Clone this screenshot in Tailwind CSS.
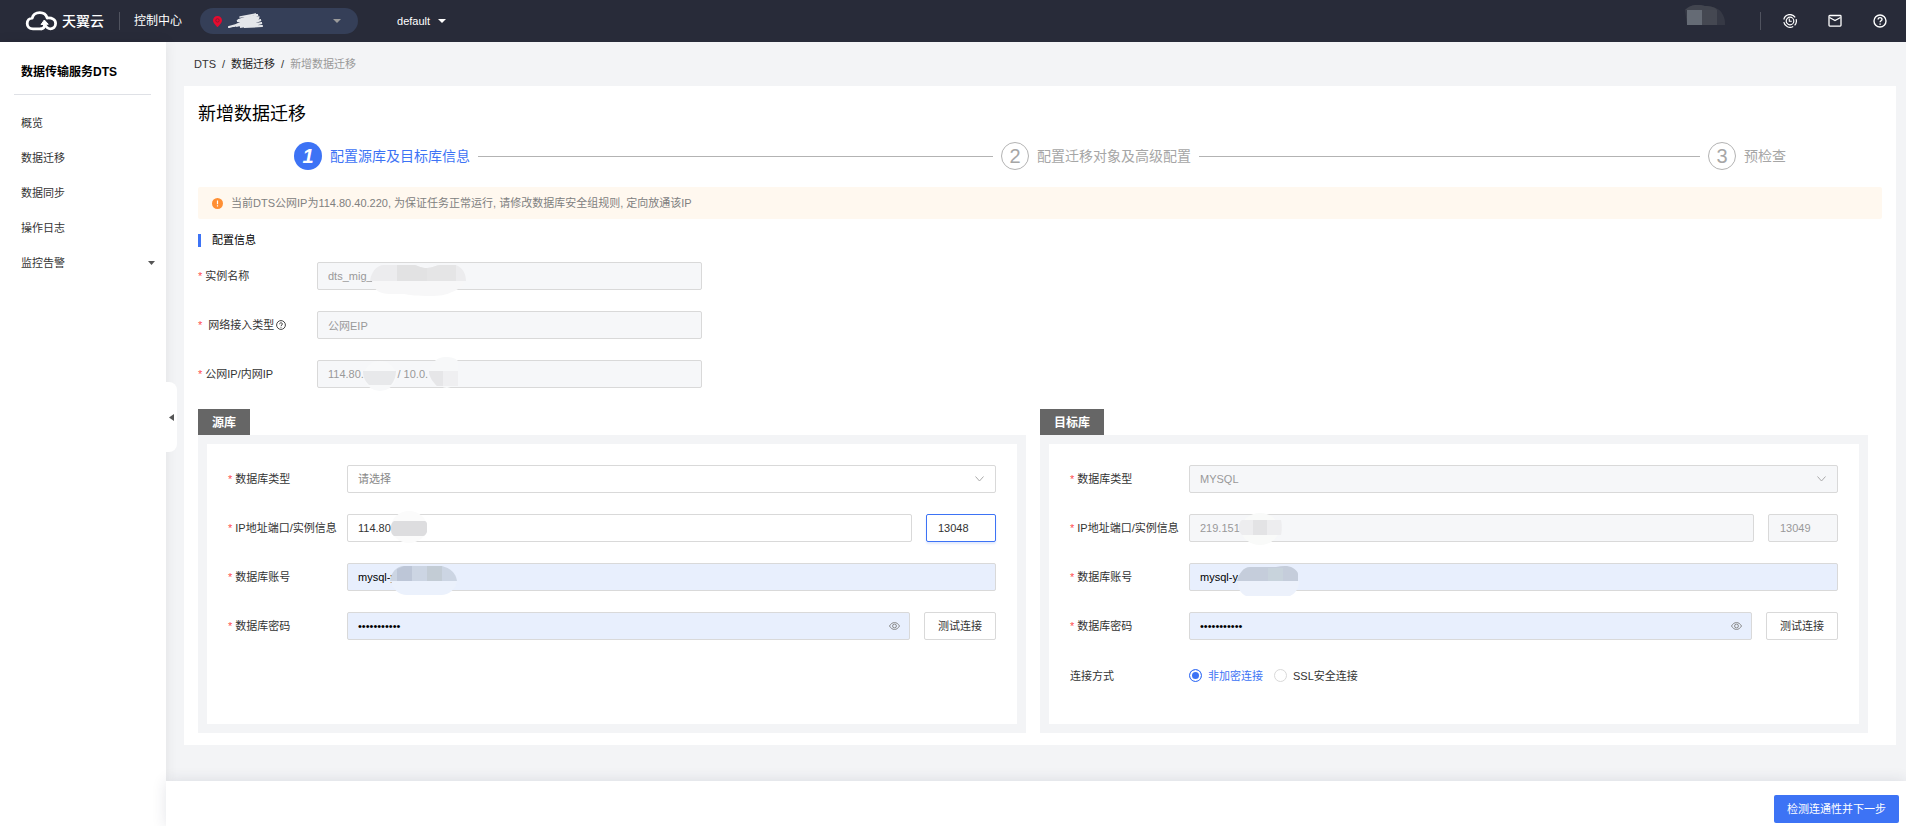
<!DOCTYPE html>
<html lang="zh-CN">
<head>
<meta charset="utf-8">
<meta name="viewport" content="width=device-width, initial-scale=1">
<title>新增数据迁移</title>
<script src="https://cdn.jsdelivr.net/npm/@tailwindcss/browser@4"></script>
</head>
<body class="flex min-h-screen flex-col bg-[#f3f4f6] font-['Liberation_Sans','Noto_Sans_CJK_SC',sans-serif] text-[11px] leading-4 text-[#333333]">

<header class="flex h-[42px] shrink-0 items-center bg-[#282b39] pr-[19px] pl-[25px] text-white">
  <a href="#" class="flex items-center gap-[5px]" aria-label="天翼云">
    <svg class="h-5 w-8" viewBox="0 0 32 20" fill="none" stroke="#fff" stroke-width="2.8" stroke-linecap="round" stroke-linejoin="round">
      <path d="M17 17.800H8C4.200 17.800 2.200 15.500 2.200 12.500c0-2.900 2-5.200 5-5.400C8 3.800 10.900 1.600 14.800 1.600c3.700 0 6.400 2.100 7.400 5.400 5-.4 8.400 1.700 8.400 5.600 0 3.200-2.400 5.200-5.200 5.200-3 0-4.400-1.800-5.800-4.400"/>
      <path d="M16.300 13.200l3-4.200 3.700 4z" fill="#fff" stroke-width="1"/>
      <path d="M19.600 13c0 2.800-1 4.800-3.600 4.800"/>
    </svg>
    <span class="text-[14px] font-medium leading-5">天翼云</span>
  </a>
  <div class="ml-[15px] h-[18px] w-px bg-[#50535f]"></div>
  <a href="#" class="ml-[14px] text-[12px]">控制中心</a>
  <button type="button" class="ml-[18px] flex h-[26px] w-[158px] items-center rounded-full bg-[#353f58] pr-[17px] pl-[13px]" aria-label="区域">
    <svg class="h-[11px] w-[9px]" viewBox="0 0 9 11"><path d="M4.500 0A4.400 4.400 0 0 0 0 4.400C0 7.200 4.500 11 4.500 11S9 7.200 9 4.400A4.400 4.400 0 0 0 4.500 0z" fill="#e60b2f"/><circle cx="4.500" cy="4.400" r="1.700" fill="none" stroke="#8d1730"/></svg>
    <svg class="ml-[6px] h-4 w-9" viewBox="0 0 36 16" fill="none" stroke="#e4e6ea" stroke-linecap="round"><path d="M1 14L12 11 6 13 30 2 9 8 31 5 8 13 33 7 12 14 34 10 16 14 34 13" stroke-width="2.200"/><path d="M12 4L28 1 10 7 31 4" stroke-width="1.500"/></svg>
    <svg class="ml-auto h-1 w-2" viewBox="0 0 8 4"><path d="M0 0h8L4 4z" fill="#9b9b9b"/></svg>
  </button>
  <button type="button" class="ml-[39px] flex items-center gap-2"><span>default</span><svg class="h-1 w-2" viewBox="0 0 8 4"><path d="M0 0h8L4 4z" fill="#fff"/></svg></button>
  <div class="ml-auto flex items-center">
    <svg class="mb-3 h-5 w-[46px]" viewBox="0 0 46 20" role="img" aria-label="账号"><path d="M4 5C10-1 18-1 24 1c8 1 14 1 18 9 2 4 2 6 2 10H6z" fill="#363945"/><path d="M4 5C10-1 18-1 24 1c6 0 10 1 12 4z" fill="#42454f"/><path d="M6 5h15v15H6z" fill="#656b75"/><path d="M21 5h15v15H21z" fill="#454852"/></svg>
    <div class="ml-[33px] h-[18px] w-px bg-[#50535f]"></div>
    <div class="ml-[22px] flex items-center gap-[31px]">
      <button type="button" aria-label="费用"><svg class="size-[14px]" viewBox="0 0 14 14" fill="none" stroke="#fff" stroke-width="1.200"><path d="M.8 5.500A6.300 6.300 0 0 1 12.200 3.400M.8 8.200a6.300 6.300 0 0 0 9.400 4.200M13.100 5.200a6.300 6.300 0 0 1-1.500 6.200"/><circle cx="7" cy="7" r="3.800"/><path d="M6.300 4.500v2.800h2.500" stroke-width="1.100"/></svg></button>
      <button type="button" aria-label="消息"><svg class="size-[14px]" viewBox="0 0 14 14" fill="none" stroke="#fff" stroke-width="1.300"><rect x="1" y="1.500" width="12" height="10.600" rx=".8"/><path d="M1.500 3.500L7 6.500l5.500-3"/></svg></button>
      <button type="button" aria-label="帮助"><svg class="size-[14px]" viewBox="0 0 14 14" fill="none" stroke="#fff" stroke-width="1.400"><circle cx="7" cy="7" r="6"/><path d="M5.100 5.600c0-2.700 3.900-2.500 3.900-.2 0 1.400-1.900 1.400-1.900 2.900M7.100 9.400v1.300"/></svg></button>
    </div>
  </div>
</header>

<div class="flex grow">
  <aside class="relative flex w-[166px] shrink-0 flex-col bg-white shadow-[0_0_12px_rgba(0,0,0,0.08)]">
    <h2 class="mr-[15px] ml-[14px] flex h-[53px] items-center border-b border-[#dfe1e6] pt-2 pl-[7px] text-[12px] font-bold text-black">数据传输服务DTS</h2>
    <nav class="flex flex-col pt-[10px] text-[#333333]">
      <a href="#" class="flex h-[35px] items-center pl-[21px]">概览</a>
      <a href="#" class="flex h-[35px] items-center pl-[21px]">数据迁移</a>
      <a href="#" class="flex h-[35px] items-center pl-[21px]">数据同步</a>
      <a href="#" class="flex h-[35px] items-center pl-[21px]">操作日志</a>
      <a href="#" class="flex h-[35px] items-center justify-between pr-[11px] pl-[21px]">监控告警<svg class="h-1 w-[7px]" viewBox="0 0 7 4"><path d="M0 0h7L3.500 4z" fill="#555"/></svg></a>
    </nav>
    <button type="button" aria-label="收起" class="absolute top-[340px] left-full z-10 flex h-[70px] w-[11px] items-center justify-center rounded-r-lg bg-white"><svg class="h-[7px] w-[5px]" viewBox="0 0 5 7"><path d="M5 0v7L0 3.500z" fill="#555"/></svg></button>
  </aside>

  <div class="flex min-w-0 grow flex-col">
    <main class="flex grow flex-col pr-[10px] pl-[18px]">
      <nav class="flex h-11 items-center gap-[6px] pl-[10px]">
        <a href="#">DTS</a><span>/</span><a href="#" class="text-[#222222]">数据迁移</a><span>/</span><span class="text-[#999999]">新增数据迁移</span>
      </nav>

      <section class="bg-white px-[14px] pt-4 pb-3">
        <h1 class="text-[18px] leading-6 text-black">新增数据迁移</h1>

        <ol class="mt-4 flex items-center px-24 text-[14px] leading-5 text-[#a6a6a6]">
          <li class="flex flex-1 items-center gap-2 text-[#3d73f5]"><span class="flex size-7 items-center justify-center rounded-full bg-[#3d73f5] text-[20px] font-bold text-white italic">1</span><span>配置源库及目标库信息</span><span class="mr-2 h-px grow bg-[#b3b3b3]"></span></li>
          <li class="flex flex-1 items-center gap-2"><span class="flex size-7 items-center justify-center rounded-full border border-[#b3b3b3] text-[20px]">2</span><span>配置迁移对象及高级配置</span><span class="mr-2 h-px grow bg-[#b3b3b3]"></span></li>
          <li class="flex items-center gap-2"><span class="flex size-7 items-center justify-center rounded-full border border-[#b3b3b3] text-[20px]">3</span><span>预检查</span></li>
        </ol>

        <div role="alert" class="mt-[17px] flex h-8 items-center gap-2 rounded-xs bg-[#fff8ef] pl-[14px] text-[#808080]">
          <svg class="size-[11px]" viewBox="0 0 11 11"><circle cx="5.500" cy="5.500" r="5.500" fill="#ff8f34"/><path d="M5.500 2.500v3.800M5.500 7.300v1.200" stroke="#fff" stroke-width="1.200"/></svg>
          <p>当前DTS公网IP为114.80.40.220, 为保证任务正常运行, 请修改数据库安全组规则, 定向放通该IP</p>
        </div>

        <h3 class="mt-[13px] flex items-center gap-[11px] text-black"><span class="h-[13px] w-[3px] bg-[#3d73f5]"></span>配置信息</h3>

        <form class="mt-[14px] flex flex-col gap-[21px]">
          <div class="flex items-center">
            <label for="name" class="flex w-[119px] shrink-0 gap-[3px]"><span class="text-[#ff4d4f]">*</span>实例名称</label>
            <div class="relative w-[385px]">
              <input id="name" disabled value="dts_mig_" class="block h-7 w-full rounded-xs border border-[#d9d9d9] bg-[#f6f7f9] px-[10px] text-[#999999]">
              <svg class="absolute top-[3px] left-[53px] h-[31px] w-24" viewBox="0 0 96 31"><path d="M2 16h92c0 6-5 8-12 11-6 3-12 4-22 4-12 0-22-1-26-2H20C10 29 3 25 2 16z" fill="#f7f7f8"/><path d="M0 16C1 8 6 0 14 0h31c4 1 6 3 12 3S66 0 70 0h16c7 3 10 9 10 16z" fill="#ececee"/><path d="M27 0h18c4 1 6 3 12 3v13H27z" fill="#e2e2e3"/><path d="M70 0h16v16H57V3c6 0 9-3 13-3z" fill="#e5e5e6"/></svg>
            </div>
          </div>
          <div class="flex items-center">
            <label for="net" class="flex w-[119px] shrink-0 items-center gap-[6px]"><span class="text-[#ff4d4f]">*</span><span class="flex items-center gap-[2px]">网络接入类型<svg class="size-[10px]" viewBox="0 0 10 10" fill="none" stroke="#444"><circle cx="5" cy="5" r="4.400"/><path d="M3.600 4.200c0-1.900 2.800-1.800 2.800-.2C6.400 5 5 5 5 6.100M5 6.900v.8"/></svg></span></label>
            <input id="net" disabled value="公网EIP" class="block h-7 w-[385px] rounded-xs border border-[#d9d9d9] bg-[#f6f7f9] px-[10px] text-[#999999]">
          </div>
          <div class="flex items-center">
            <label for="ip" class="flex w-[119px] shrink-0 gap-[3px]"><span class="text-[#ff4d4f]">*</span>公网IP/内网IP</label>
            <div class="relative w-[385px]">
              <input id="ip" disabled value="114.80.           / 10.0." class="block h-7 w-full rounded-xs border border-[#d9d9d9] bg-[#f6f7f9] px-[10px] text-[#999999]">
              <svg class="absolute -top-[3px] left-[46px] h-[34px] w-[97px]" viewBox="0 0 97 34"><ellipse cx="17" cy="19" rx="16" ry="15" fill="#f8f9fa"/><path d="M0 14h33c0 6-2 10-5 14H6C2 24 0 20 0 14z" fill="#e8e9eb"/><path d="M66 14C68 5 75 0 82 0s10 1 13 4v24c-4 1-7 2-11 3-8-1-16-7-18-17z" fill="#f7f8f9"/><path d="M66 14h29v15H74c-4-4-8-9-8-15z" fill="#efeff1"/><path d="M66 14h14v15h-6c-4-4-8-9-8-15z" fill="#e6e6e8"/></svg>
            </div>
          </div>
        </form>

        <div class="mt-[21px] mr-[14px] grid grid-cols-2 gap-[14px]">
          <section class="flex flex-col items-start">
            <h3 class="flex h-[26px] items-center bg-[#666666] px-[14px] pt-px text-[12px] font-bold text-white">源库</h3>
            <form class="flex min-h-[298px] w-full grow flex-col gap-[21px] border-9 border-[#f3f4f6] p-[21px]">
              <div class="flex items-center">
                <label for="s-type" class="flex w-[119px] shrink-0 gap-[3px]"><span class="text-[#ff4d4f]">*</span>数据库类型</label>
                <div class="relative grow">
                  <select id="s-type" class="block h-7 w-full appearance-none rounded-xs border border-[#d9d9d9] bg-white px-[10px] text-[#888888]"><option>请选择</option></select>
                  <svg class="pointer-events-none absolute top-[11px] right-3 h-[6px] w-[9px]" viewBox="0 0 9 6" fill="none" stroke="#aaa"><path d="M.5.500l4 4.500 4-4.500"/></svg>
                </div>
              </div>
              <div class="flex items-center">
                <label for="s-ip" class="flex w-[119px] shrink-0 gap-[3px]"><span class="text-[#ff4d4f]">*</span>IP地址端口/实例信息</label>
                <div class="relative grow">
                  <input id="s-ip" value="114.80" class="block h-7 w-full rounded-xs border border-[#d9d9d9] bg-white px-[10px]">
                  <svg class="absolute -top-[3px] left-[43px] h-[34px] w-[37px]" viewBox="0 0 37 34"><ellipse cx="19" cy="16" rx="18" ry="16" fill="#fbfbfb"/><path d="M1 17c0-4 1-6 3-7h31c2 1 2 2 2 4v7c-1 2-2 4-4 4H4c-3-2-3-5-3-8z" fill="#dddddf"/></svg>
                </div>
                <input aria-label="源库端口" value="13048" class="ml-[14px] h-7 w-[70px] rounded-xs border border-[#3d73f5] bg-white px-[11px] shadow-[0_2px_2px_rgba(61,115,245,0.15)]">
              </div>
              <div class="flex items-center">
                <label for="s-user" class="flex w-[119px] shrink-0 gap-[3px]"><span class="text-[#ff4d4f]">*</span>数据库账号</label>
                <div class="relative grow">
                  <input id="s-user" value="mysql-y" class="block h-7 w-full rounded-xs border border-[#d9d9d9] bg-[#e8effd] px-[10px] text-black">
                  <svg class="absolute top-[2px] left-[43px] h-[30px] w-[67px]" viewBox="0 0 67 30"><path d="M1 16h66c-1 8-8 14-16 14H17C9 30 2 24 1 16z" fill="#ebf1fc"/><path d="M0 16C1 8 6 1 14 1h38c8 2 14 7 15 15z" fill="#ccd5e3"/><path d="M7 4l7-3h8v15H7z" fill="#bdc6d7"/><path d="M37 1h15v15H37z" fill="#c3ccd5"/></svg>
                </div>
              </div>
              <div class="flex items-center">
                <label for="s-pwd" class="flex w-[119px] shrink-0 gap-[3px]"><span class="text-[#ff4d4f]">*</span>数据库密码</label>
                <div class="relative grow">
                  <input id="s-pwd" type="password" value="mysql-passw" class="block h-7 w-full rounded-xs border border-[#d9d9d9] bg-[#e8effd] px-[10px] text-black">
                  <button type="button" aria-label="显示密码" class="absolute top-[10px] right-[10px]"><svg class="h-2 w-[11px]" viewBox="0 0 11 8" fill="none" stroke="#888"><path d="M.5 4C3-.6 8-.6 10.500 4 8 8.600 3 8.600.5 4z"/><circle cx="5.500" cy="4" r="1.900"/></svg></button>
                </div>
                <button type="button" class="ml-[14px] h-7 w-[72px] rounded-xs border border-[#d9d9d9] bg-white">测试连接</button>
              </div>
            </form>
          </section>

          <section class="flex flex-col items-start">
            <h3 class="flex h-[26px] items-center bg-[#666666] px-[14px] pt-px text-[12px] font-bold text-white">目标库</h3>
            <form class="flex min-h-[298px] w-full grow flex-col gap-[21px] border-9 border-[#f3f4f6] p-[21px]">
              <div class="flex items-center">
                <label for="t-type" class="flex w-[119px] shrink-0 gap-[3px]"><span class="text-[#ff4d4f]">*</span>数据库类型</label>
                <div class="relative grow">
                  <select id="t-type" disabled class="block h-7 w-full appearance-none rounded-xs border border-[#d9d9d9] bg-[#f6f7f9] px-[10px] text-[#999999] opacity-100"><option>MYSQL</option></select>
                  <svg class="pointer-events-none absolute top-[11px] right-3 h-[6px] w-[9px]" viewBox="0 0 9 6" fill="none" stroke="#aaa"><path d="M.5.500l4 4.500 4-4.500"/></svg>
                </div>
              </div>
              <div class="flex items-center">
                <label for="t-ip" class="flex w-[119px] shrink-0 gap-[3px]"><span class="text-[#ff4d4f]">*</span>IP地址端口/实例信息</label>
                <div class="relative grow">
                  <input id="t-ip" disabled value="219.151." class="block h-7 w-full rounded-xs border border-[#d9d9d9] bg-[#f6f7f9] px-[10px] text-[#999999]">
                  <svg class="absolute -top-[1px] left-[50px] h-8 w-[43px]" viewBox="0 0 43 32"><ellipse cx="21" cy="16" rx="19" ry="16" fill="#f9faf9"/><path d="M0 15c0-4 1-7 3-8h39c1 4 1 11 0 15H3c-2-2-3-4-3-7z" fill="#ededef"/><path d="M14 7h14v15H14z" fill="#e3e3e5"/></svg>
                </div>
                <input aria-label="目标库端口" disabled value="13049" class="ml-[14px] h-7 w-[70px] rounded-xs border border-[#d9d9d9] bg-[#f6f7f9] px-[11px] text-[#999999]">
              </div>
              <div class="flex items-center">
                <label for="t-user" class="flex w-[119px] shrink-0 gap-[3px]"><span class="text-[#ff4d4f]">*</span>数据库账号</label>
                <div class="relative grow">
                  <input id="t-user" value="mysql-y" class="block h-7 w-full rounded-xs border border-[#d9d9d9] bg-[#e8effd] px-[10px] text-black">
                  <svg class="absolute top-[3px] left-12 h-[30px] w-[63px]" viewBox="0 0 63 30"><path d="M1 15h61c0 7-3 12-9 15H9c-6-3-9-8-8-15z" fill="#ecf1fb"/><path d="M0 15C2 8 6 1 13 1h26c6-1 12-2 17 1 3 2 5 4 5 6v7z" fill="#c5cddb"/><path d="M31 2h15v13H31z" fill="#c8d3dc"/></svg>
                </div>
              </div>
              <div class="flex items-center">
                <label for="t-pwd" class="flex w-[119px] shrink-0 gap-[3px]"><span class="text-[#ff4d4f]">*</span>数据库密码</label>
                <div class="relative grow">
                  <input id="t-pwd" type="password" value="mysql-passw" class="block h-7 w-full rounded-xs border border-[#d9d9d9] bg-[#e8effd] px-[10px] text-black">
                  <button type="button" aria-label="显示密码" class="absolute top-[10px] right-[10px]"><svg class="h-2 w-[11px]" viewBox="0 0 11 8" fill="none" stroke="#888"><path d="M.5 4C3-.6 8-.6 10.500 4 8 8.600 3 8.600.5 4z"/><circle cx="5.500" cy="4" r="1.900"/></svg></button>
                </div>
                <button type="button" class="ml-[14px] h-7 w-[72px] rounded-xs border border-[#d9d9d9] bg-white">测试连接</button>
              </div>
              <div class="flex h-7 items-center pt-px" role="radiogroup" aria-label="连接方式">
                <span class="w-[119px] shrink-0">连接方式</span>
                <label class="flex items-center gap-[6px] text-[#3d73f5]"><input type="radio" name="mode" checked class="size-[13px] appearance-none rounded-full border border-[#d9d9d9] bg-white checked:border-[#3d73f5] checked:bg-[#3d73f5] checked:shadow-[inset_0_0_0_2px_#fff]">非加密连接</label>
                <label class="ml-[11px] flex items-center gap-[6px]"><input type="radio" name="mode" class="size-[13px] appearance-none rounded-full border border-[#d9d9d9] bg-white checked:border-[#3d73f5] checked:bg-[#3d73f5] checked:shadow-[inset_0_0_0_2px_#fff]">SSL安全连接</label>
              </div>
            </form>
          </section>
        </div>
      </section>
    </main>

    <footer class="relative mt-9 flex h-[46px] shrink-0 items-start justify-end bg-white pt-[14px] pr-[7px] shadow-[0_0_14px_rgba(31,41,75,0.12)]">
      <button type="button" class="h-7 w-[125px] rounded-xs bg-[#3d73f5] text-white">检测连通性并下一步</button>
    </footer>
  </div>
</div>
</body>
</html>
